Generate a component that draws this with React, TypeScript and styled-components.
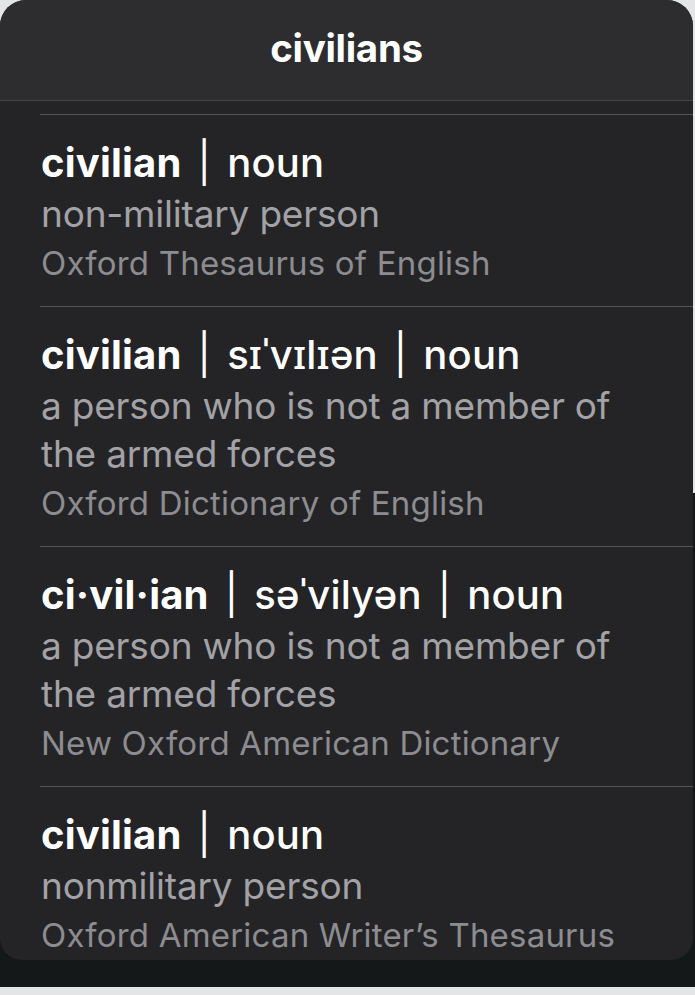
import styled, { createGlobalStyle } from 'styled-components';

const GlobalStyle = createGlobalStyle`
  html, body {
    margin: 0;
    padding: 0;
    background: #e4e5e7;
  }
  body {
    font-family: Inter, "Noto Sans", sans-serif;
    -webkit-font-smoothing: antialiased;
  }
`;

const Screen = styled.div`
  width: 695px;
  height: 987px;
  background: linear-gradient(to bottom, #e4e5e7 50%, #151819 50%);
`;

const Panel = styled.div`
  width: 693px;
  height: 960px;
  border-radius: 26px 26px 22px 22px;
  background: #242426;
  overflow: hidden;
  display: flex;
  flex-direction: column;
`;

const Header = styled.div`
  height: 101px;
  flex-shrink: 0;
  background: #2d2d2f;
  border-bottom: 1px solid #444446;
  box-sizing: border-box;
  display: flex;
  align-items: center;
  justify-content: center;
  padding-bottom: 4px;
`;

const Title = styled.h1`
  margin: 0;
  color: #ffffff;
  font-size: 38.5px;
  font-weight: 700;
  letter-spacing: -0.3px;
`;

const List = styled.div`
  padding-top: 13px;
`;

const Entry = styled.div`
  margin-left: 40px;
  border-top: 1px solid #545456;
  padding: 20px 0 18px 1px;
  display: flex;
  flex-direction: column;
`;

type Tone = 'head' | 'def' | 'src';

const sizes: Record<Tone, string> = { head: '40px', def: '37px', src: '33px' };
const colors: Record<Tone, string> = { head: '#ffffff', def: '#a2a2a7', src: '#8c8c91' };
const heights: Record<Tone, string> = { head: '55px', def: '48px', src: '50px' };
const spacing: Record<Tone, string> = { head: '0.2px', def: '-0.2px', src: '0.2px' };

const Line = styled.div<{ $tone: Tone }>`
  font-size: ${(p) => sizes[p.$tone]};
  line-height: ${(p) => heights[p.$tone]};
  white-space: nowrap;
  color: ${(p) => colors[p.$tone]};
  font-weight: ${(p) => (p.$tone === 'head' ? 500 : 400)};
  letter-spacing: ${(p) => spacing[p.$tone]};
`;

const Word = styled.b`
  font-weight: 700;
`;

const Bar = styled.span`
  font-weight: 400;
  margin: 0 0.4em;
`;

type Item = {
  word: string;
  parts: string[];
  def: string[];
  src: string;
};

const items: Item[] = [
  {
    word: 'civilian',
    parts: ['noun'],
    def: ['non-military person'],
    src: 'Oxford Thesaurus of English',
  },
  {
    word: 'civilian',
    parts: ['sɪˈvɪlɪən', 'noun'],
    def: ['a person who is not a member of', 'the armed forces'],
    src: 'Oxford Dictionary of English',
  },
  {
    word: 'ci·vil·ian',
    parts: ['səˈvilyən', 'noun'],
    def: ['a person who is not a member of', 'the armed forces'],
    src: 'New Oxford American Dictionary',
  },
  {
    word: 'civilian',
    parts: ['noun'],
    def: ['nonmilitary person'],
    src: 'Oxford American Writer’s Thesaurus',
  },
];

export default function App() {
  return (
    <>
      <GlobalStyle />
      <Screen>
        <Panel>
          <Header>
            <Title>civilians</Title>
          </Header>
          <List>
            {items.map((it, i) => (
              <Entry key={i}>
                <Line $tone="head">
                  <Word>{it.word}</Word>
                  {it.parts.map((p, j) => (
                    <span key={j}>
                      <Bar>|</Bar>
                      {p}
                    </span>
                  ))}
                </Line>
                {it.def.map((d, j) => (
                  <Line key={j} $tone="def">
                    {d}
                  </Line>
                ))}
                <Line $tone="src">{it.src}</Line>
              </Entry>
            ))}
          </List>
        </Panel>
      </Screen>
    </>
  );
}
